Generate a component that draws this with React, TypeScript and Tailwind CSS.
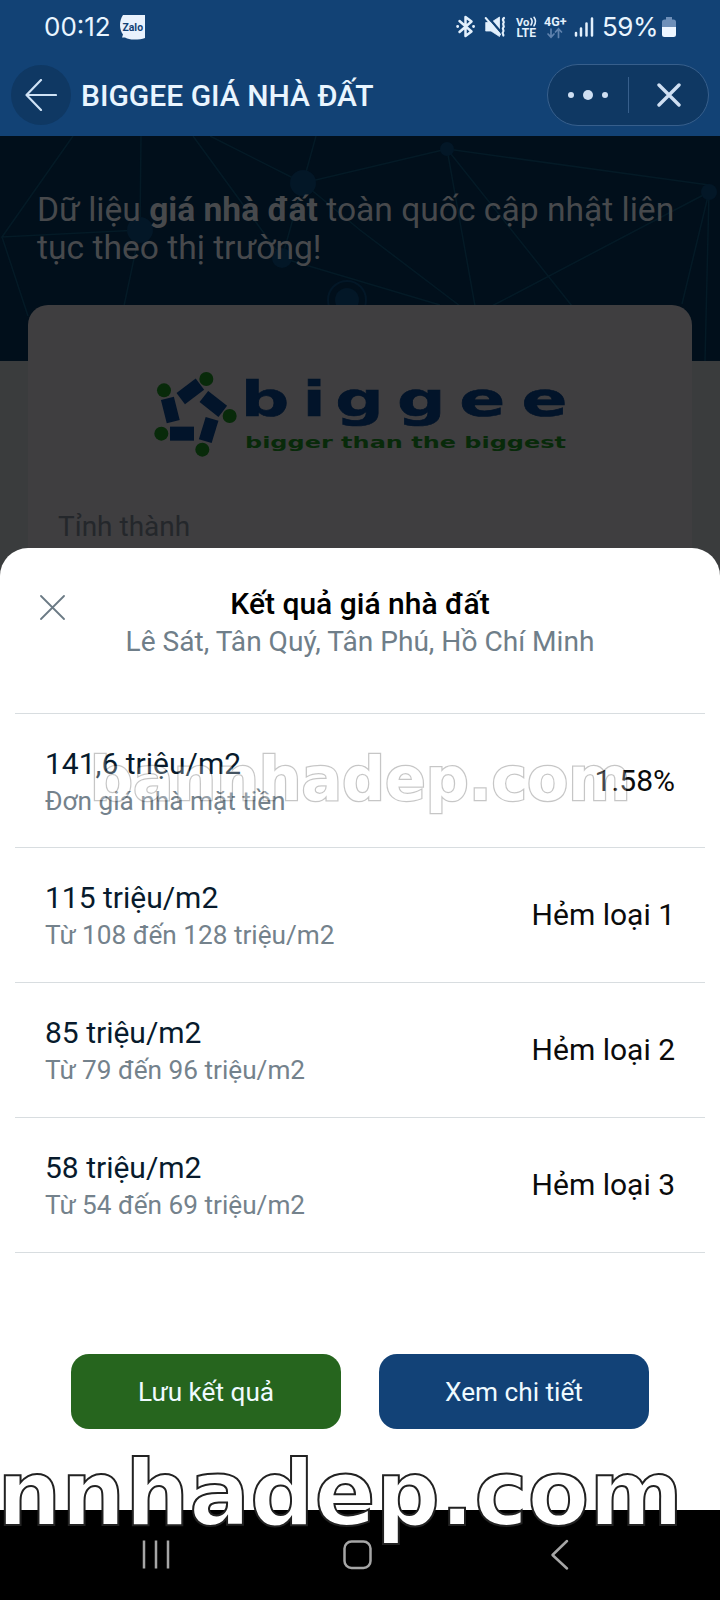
interface PriceRow {
  id: string;
  price: string;
  note: string;
  label: string;
}

const priceRows: PriceRow[] = [
  { id: 'front', price: '141,6 triệu/m2', note: 'Đơn giá nhà mặt tiền', label: '1.58%' },
  { id: 'alley-1', price: '115 triệu/m2', note: 'Từ 108 đến 128 triệu/m2', label: 'Hẻm loại 1' },
  { id: 'alley-2', price: '85 triệu/m2', note: 'Từ 79 đến 96 triệu/m2', label: 'Hẻm loại 2' },
  { id: 'alley-3', price: '58 triệu/m2', note: 'Từ 54 đến 69 triệu/m2', label: 'Hẻm loại 3' }
];

const StatusIcons = () => (
  <svg width="138" height="26" viewBox="0 0 138 26" fill="none" stroke="#e3f0fc" strokeLinecap="round">
    {/* bluetooth */}
    <path d="M3.500 7 15.500 17.500 9.500 22V3l6 4.500L3.500 18" strokeWidth="2.500" strokeLinejoin="round" />
    <path d="M1.600 12.500h.1M17.500 12.500h.1" strokeWidth="2.800" />
    {/* muted speaker */}
    <path d="M30 8.500h5L43.500 3v19.500L35 17h-5z" fill="#e3f0fc" stroke="#e3f0fc" strokeWidth=".8" strokeLinejoin="round" />
    <path d="M31.500 2.500 46 19.500" stroke="#124275" strokeWidth="2.500" strokeLinecap="butt" />
    <path d="M29.700 4 44 20.500" strokeWidth="2" />
    <path d="M48 4c-3 2 1 3.500-.5 5s1.500 3-.2 4.500 1.500 3-.2 4.500 1 2.500.2 3.500" strokeWidth="2.200" />
    {/* volte */}
    <text x="60" y="11.500" fill="#e3f0fc" stroke="none" fontFamily="Roboto, sans-serif" fontWeight="700" fontSize="11.500" textLength="13.500" lengthAdjust="spacingAndGlyphs">Vo</text>
    <path d="M75 4.500q2.200 3 0 6.500M78 3.300q3 4 0 8.500" strokeWidth="1.600" />
    <text x="60.500" y="23.300" fill="#e3f0fc" stroke="none" fontFamily="Roboto, sans-serif" fontWeight="700" fontSize="12.500" textLength="19.500" lengthAdjust="spacingAndGlyphs">LTE</text>
    {/* 4G+ */}
    <text x="88" y="12" fill="#e3f0fc" stroke="none" fontFamily="Roboto, sans-serif" fontWeight="700" fontSize="12.500" textLength="22.500" lengthAdjust="spacingAndGlyphs">4G+</text>
    <path d="M95 15v8M92 20l3 3.200 3-3.200M102.500 23.500v-8M99.500 18l3-3.200 3 3.200" stroke="#5f82ad" strokeWidth="1.700" />
    {/* signal */}
    <path d="M120 19v2.500M125 14.500v7M130.500 9.500v12M136 4.500v17" strokeWidth="2.500" />
  </svg>
);

const BatteryIcon = () => (
  <svg width="14" height="22" viewBox="0 0 14 22">
    <path d="M4 1h6v2.500h1.500A2.500 2.500 0 0 1 14 6v6H0V6a2.500 2.500 0 0 1 2.500-2.500H4z" fill="#6e8fb8" />
    <path d="M0 11h14v7.500a2.500 2.500 0 0 1-2.500 2.500h-9A2.500 2.500 0 0 1 0 18.500z" fill="#eef6ff" />
  </svg>
);

const AppHeader = () => (
  <header className="h-[136px] shrink-0 bg-[#124275] text-[#e9f5ff]">
    <div className="flex h-[54px] items-center justify-between pl-[44px] pr-[44px]">
      <div className="flex items-center">
        <span className="w-[75px] font-['Inter',sans-serif] text-[26px] leading-none">00:12</span>
        <svg width="27" height="25" viewBox="0 0 27 25">
          <path d="M4 0h22v23c-3 1-6 1.500-11 1.500-4 0-6-.6-9-2l-3 .1 1-3C0 14 0 6 4 0z" fill="#e9f2fd" />
          <text x="3.500" y="15.500" fill="#124275" fontFamily="Roboto, sans-serif" fontWeight="700" fontSize="10.500" textLength="20.500" lengthAdjust="spacingAndGlyphs">Zalo</text>
        </svg>
      </div>
      <div className="flex items-center">
        <StatusIcons />
        <span className="ml-[8px] w-[55px] whitespace-nowrap font-['Inter',sans-serif] text-[26px] leading-none tracking-[-0.5px]">59%</span>
        <span className="ml-[5px]">
          <BatteryIcon />
        </span>
      </div>
    </div>
    <div className="flex h-[81px] items-center pl-[11px] pr-[11px]">
      <button type="button" className="flex size-[60px] items-center justify-center rounded-full bg-[#0f3863]">
        <svg width="32" height="32" viewBox="0 0 32 32" fill="none" stroke="#cfe2f5" strokeWidth="2.200" strokeLinecap="round" strokeLinejoin="round">
          <path d="M31 16H1.500M16 1 1.500 16 16 31" />
        </svg>
      </button>
      <h1 className="ml-[10px] pt-[2px] text-[30px] font-medium leading-none">BIGGEE GIÁ NHÀ ĐẤT</h1>
      <div className="ml-auto flex h-[62px] w-[162px] items-center rounded-full border border-[#375f8c] bg-[#0f3863]">
        <div className="flex w-[80px] items-center justify-center gap-[9px]">
          <span className="size-[6px] rounded-full bg-[#cfdff2]" />
          <span className="size-[10px] rounded-full bg-[#cfdff2]" />
          <span className="size-[6px] rounded-full bg-[#cfdff2]" />
        </div>
        <div className="h-[36px] w-px bg-[#375f8c]" />
        <div className="flex flex-1 items-center justify-center">
          <svg width="24" height="24" viewBox="0 0 24 24" stroke="#cfdff2" strokeWidth="3.400" strokeLinecap="round">
            <path d="M2 2l20 20M22 2 2 22" />
          </svg>
        </div>
      </div>
    </div>
  </header>
);

const HeroNetwork = () => (
  <svg className="absolute inset-0" width="720" height="225" viewBox="0 0 720 225" fill="none">
    <path
      d="M73 0 2 101 140 94M2 101l26 79M141 0l-1 94-16 76M193 0l89 122M210 0l93 47M316 0l-13 47 144-34M303 47l-21 75M303 47l57 47 100 76M282 122l158 47M447 13l262 36M447 13l28 157M447 13l125 157M709 56 490 171M709 56l-27 112M709 56l-4 169"
      stroke="#041a26"
      strokeWidth="1.500"
    />
    <g fill="#031727">
      <circle cx="303" cy="47" r="13" />
      <circle cx="140" cy="94" r="13" />
      <circle cx="282" cy="122" r="10" />
      <circle cx="347" cy="164" r="12" />
      <circle cx="447" cy="13" r="7" />
      <circle cx="709" cy="56" r="8" />
    </g>
    <circle cx="347" cy="164" r="19" stroke="#031727" strokeWidth="2" />
  </svg>
);

const BiggeeLogo = () => (
  <svg width="420" height="100" viewBox="150 362 420 100">
    <g transform="translate(140 350) scale(.3333)">
      <g fill="#02142a">
        <rect x="-36" y="-21" width="72" height="42" transform="translate(151 124) rotate(-37)" />
        <rect x="-36" y="-21" width="72" height="42" transform="translate(220 162) rotate(38)" />
        <rect x="-20" y="-36" width="40" height="72" transform="translate(91 180) rotate(-14)" />
        <rect x="-36" y="-21" width="72" height="42" transform="translate(126 251)" />
        <rect x="-20" y="-35" width="40" height="70" transform="translate(206 240) rotate(17)" />
      </g>
      <g fill="#082a0a">
        <circle cx="199" cy="87" r="21" />
        <circle cx="72" cy="121" r="21" />
        <circle cx="269" cy="198" r="21" />
        <circle cx="64" cy="251" r="21" />
        <circle cx="187" cy="299" r="21" />
      </g>
    </g>
    <text
      transform="translate(0 416) scale(1.400 1)"
      x="172 216 239.500 283.500 328 372.500"
      y="0"
      fill="#02142a"
      stroke="#02142a"
      strokeWidth=".6"
      fontFamily="'DejaVu Sans', sans-serif"
      fontWeight="700"
      fontSize="48.500"
    >
      biggee
    </text>
    <text x="245" y="447.500" fill="#082a0a" fontFamily="'DejaVu Sans', sans-serif" fontWeight="700" fontSize="16.500" textLength="321" lengthAdjust="spacingAndGlyphs">
      bigger than the biggest
    </text>
  </svg>
);

const SearchPage = () => (
  <section className="h-[440px] shrink-0 overflow-hidden bg-[#3a3c3d]">
    <div className="relative h-[225px] bg-[#010f1b]">
      <HeroNetwork />
      <p className="relative whitespace-nowrap pl-[37px] pt-[55px] text-[33.600px] leading-[38px] text-[#47494c]">
        Dữ liệu <strong className="font-bold">giá nhà đất</strong> toàn quốc cập nhật liên
        <br />
        tục theo thị trường!
      </p>
    </div>
    <div className="relative mx-[28px] -mt-[56px] h-[300px] rounded-t-[20px] bg-[#3f3e40] pt-[57px]">
      <div className="pl-[122px]">
        <BiggeeLogo />
      </div>
      <p className="mt-[48px] pl-[30px] text-[28px] leading-[34px] text-[#24272b]">Tỉnh thành</p>
    </div>
  </section>
);

const ResultSheet = () => (
  <section className="relative -mt-[28px] flex h-[962px] shrink-0 flex-col rounded-t-[28px] bg-white">
    <div className="flex h-[165px] px-[40px] pt-[38px]">
      <button type="button" className="mt-[9px] size-[25px]">
        <svg width="25" height="25" viewBox="0 0 25 25" stroke="#6b7a85" strokeWidth="1.800" strokeLinecap="round">
          <path d="M1 1l23 23M24 1 1 24" />
        </svg>
      </button>
      <div className="flex-1 pr-[25px] text-center">
        <h2 className="text-[30px] font-medium leading-[36px] text-black">Kết quả giá nhà đất</h2>
        <p className="text-[28.100px] leading-[39px] text-[#6f7e89]">Lê Sát, Tân Quý, Tân Phú, Hồ Chí Minh</p>
      </div>
    </div>
    <ul className="mx-[15px] border-t border-[#d8dde0]">
      {priceRows.map((row) => (
        <li
          key={row.id}
          className="flex h-[135px] items-center justify-between border-b border-[#d8dde0] px-[30px] first:h-[134px]"
        >
          <div className="pt-[4px]">
            <p className="text-[30px] leading-[36px] text-[#071a2c]">{row.price}</p>
            <p className="text-[26.200px] leading-[38px] text-[#74828c]">{row.note}</p>
          </div>
          <span className="text-[30px] leading-[36px] text-[#0b0b0b]">{row.label}</span>
        </li>
      ))}
    </ul>
    <div className="mt-[101px] flex gap-[38px] px-[71px] text-[26.200px] text-[#effaff]">
      <button type="button" className="h-[75px] w-[270px] rounded-[18px] bg-[#26651e] pt-[2px]">
        Lưu kết quả
      </button>
      <button type="button" className="h-[75px] w-[270px] rounded-[18px] bg-[#124277] pt-[2px]">
        Xem chi tiết
      </button>
    </div>
  </section>
);

const NavigationBar = () => (
  <nav className="h-[90px] shrink-0 bg-black">
    <svg width="720" height="90" viewBox="0 0 720 90" fill="none" stroke="#a6a6a6" strokeWidth="2.500" strokeLinecap="round" strokeLinejoin="round">
      <path d="M144 30.500v28M156 30.500v28M168 30.500v28" strokeLinecap="butt" />
      <rect x="344.500" y="31.500" width="26" height="26.500" rx="7" />
      <path d="M567 31 552.500 45 567 58.500" />
    </svg>
  </nav>
);

const App = () => (
  <div className="relative flex h-[1600px] w-[720px] flex-col overflow-hidden bg-black font-['Roboto',sans-serif]">
    <AppHeader />
    <SearchPage />
    <ResultSheet />
    <NavigationBar />
    <div className="pointer-events-none absolute left-[90px] top-[749px] whitespace-nowrap font-['DejaVu_Sans',sans-serif] text-[60px] font-bold leading-[60px] text-white opacity-25 [-webkit-text-stroke:2.500px_#222] [paint-order:stroke_fill]">
      bannhadep.com
    </div>
    <div className="pointer-events-none absolute left-[-128px] top-[1449px] whitespace-nowrap font-['DejaVu_Sans',sans-serif] text-[90px] font-bold leading-[90px] text-white [-webkit-text-stroke:2px_#222]">
      bannhadep.com
    </div>
  </div>
);

export default App;
